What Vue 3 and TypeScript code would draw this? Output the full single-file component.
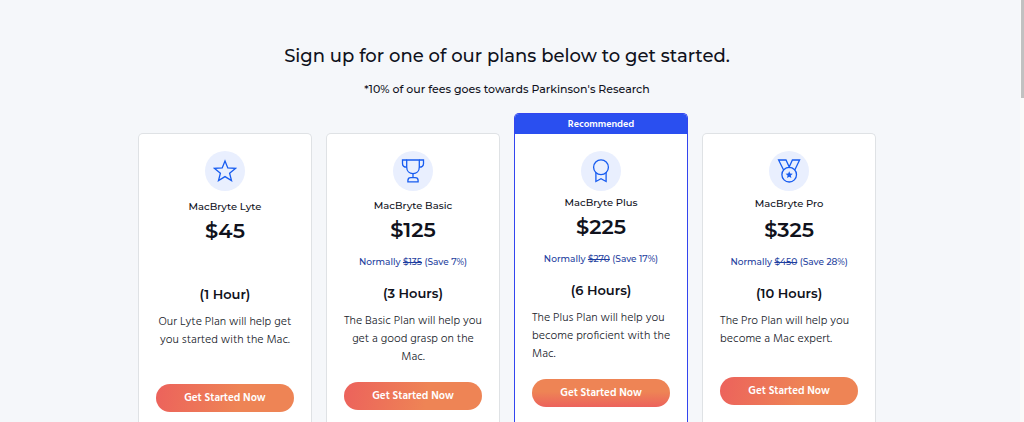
<script setup lang="ts">
type IconName = 'star' | 'trophy' | 'ribbon' | 'medal'

interface Plan {
  id: string
  name: string
  price: string
  regular?: string
  save?: string
  hours: string
  text: string
  icon: IconName
  featured?: boolean
}

const plans: Plan[] = [
  { id: 'lyte', name: 'MacBryte Lyte', price: '$45', hours: '(1 Hour)', text: 'Our Lyte Plan will help get you started with the Mac.', icon: 'star' },
  { id: 'basic', name: 'MacBryte Basic', price: '$125', regular: '$135', save: '7%', hours: '(3 Hours)', text: 'The Basic Plan will help you get a good grasp on the Mac.', icon: 'trophy' },
  { id: 'plus', name: 'MacBryte Plus', price: '$225', regular: '$270', save: '17%', hours: '(6 Hours)', text: 'The Plus Plan will help you become proficient with the Mac.', icon: 'ribbon', featured: true },
  { id: 'pro', name: 'MacBryte Pro', price: '$325', regular: '$450', save: '28%', hours: '(10 Hours)', text: 'The Pro Plan will help you become a Mac expert.', icon: 'medal' },
]
</script>

<template>
  <div class="page">
    <main class="content">
      <h1 class="title">Sign up for one of our plans below to get started.</h1>
      <p class="subtitle">*10% of our fees goes towards Parkinson's Research</p>

      <section class="plans">
        <article v-for="plan in plans" :key="plan.id" class="plan" :class="[plan.id, { featured: plan.featured }]">
          <div v-if="plan.featured" class="ribbon">Recommended</div>
          <div class="body">
            <div class="badge">
              <svg class="icon" viewBox="0 0 24 24" aria-hidden="true">
                <path v-if="plan.icon === 'star'" d="M12 2 L14.8 8.9 L22.4 9.4 L16.6 14.2 L18.5 21.6 L12 17.6 L5.5 21.6 L7.4 14.2 L1.6 9.4 L9.2 8.9 Z" />
                <template v-else-if="plan.icon === 'trophy'">
                  <path d="M5.7 1 H18.3 V8 C18.3 12 15.6 14.6 12 14.6 S5.7 12 5.7 8 Z" />
                  <path d="M5.7 1 H1.5 V4.4 C1.5 6.8 3 8.2 5.8 8.2 M18.3 1 H22.5 V4.4 C22.5 6.8 21 8.2 18.2 8.2" />
                  <path d="M12 14.6 V18.5 M6.9 22.8 V21.4 C6.9 19.7 8.1 18.6 9.8 18.6 H14.2 C15.9 18.6 17.1 19.7 17.1 21.4 V22.8 Z" />
                </template>
                <template v-else-if="plan.icon === 'ribbon'">
                  <circle cx="12" cy="8.3" r="7.4" />
                  <path d="M6.9 13.8 V22.5 L12 19.8 L17.1 22.5 V13.8" />
                </template>
                <template v-else>
                  <circle cx="12.2" cy="15.7" r="7.3" />
                  <path d="M6.6 11 L1.6 1 H9 L12.2 8 L15.4 1 H22.6 L17.8 11 M12.2 8 L11.6 8.7" />
                  <path class="solid" d="M12.2 12.2 L13.2 14.6 L15.8 14.8 L13.8 16.5 L14.4 19 L12.2 17.7 L10 19 L10.6 16.5 L8.6 14.8 L11.2 14.6 Z" />
                </template>
              </svg>
            </div>
            <h2 class="name">{{ plan.name }}</h2>
            <p class="price">{{ plan.price }}</p>
            <p class="note">
              <template v-if="plan.regular">Normally <s>{{ plan.regular }}</s> (Save {{ plan.save }})</template>
            </p>
            <p class="hours">{{ plan.hours }}</p>
            <p class="text">{{ plan.text }}</p>
            <button type="button" class="cta">Get Started Now</button>
          </div>
        </article>
      </section>
    </main>
    <div class="scrollbar" aria-hidden="true"><div class="thumb"></div></div>
  </div>
</template>

<style>
body {
  margin: 0;
  background: #f5f7fa;
}
</style>

<style scoped>
.page {
  display: flex;
  height: 100vh;
  overflow: hidden;
  background: #f5f7fa;
  color: #10121c;
  font-family: Montserrat, Inter, "Liberation Sans", sans-serif;
}
h1, h2, p {
  margin: 0;
}
.content {
  flex: 1;
  display: flex;
  flex-direction: column;
  align-items: center;
  padding: 44px 0 0;
  margin: 0 6px 0 0;
}
.title {
  font-size: 18px;
  line-height: 24px;
  font-weight: 500;
}
.subtitle {
  margin-top: 13px;
  font-size: 11px;
  line-height: 16px;
  font-weight: 500;
}
.plans {
  flex: 1;
  display: grid;
  grid-template-columns: repeat(4, 1fr);
  gap: 14px;
  width: 72.8%;
  margin-top: 16px;
}
.plan {
  display: flex;
  flex-direction: column;
  box-sizing: border-box;
  min-width: 0;
  margin-top: 20px;
  background: #fff;
  border: 1px solid #dfe2e5;
  border-bottom: 0;
  border-radius: 5px 5px 0 0;
}
.featured {
  margin-top: 0;
  border-color: #3345ef;
}
.ribbon {
  height: 20px;
  background: #2a4ff0;
  border-radius: 4px 4px 0 0;
  color: #fff;
  font: 600 10px/20px Hind, "Noto Sans", sans-serif;
  text-align: center;
}
.body {
  display: flex;
  flex-direction: column;
  align-items: center;
  padding: 17px 17px 24px;
  text-align: center;
}
.badge {
  display: flex;
  align-items: center;
  justify-content: center;
  width: 40px;
  height: 40px;
  border-radius: 50%;
  background: #e9effe;
}
.icon {
  width: 24px;
  height: 24px;
  fill: none;
  stroke: #175cf0;
  stroke-width: 1.3;
}
.solid {
  fill: #175cf0;
  stroke: none;
}
.name {
  margin-top: 8px;
  font-size: 10px;
  line-height: 16px;
  font-weight: 500;
}
.price {
  margin-top: 2px;
  font-size: 21px;
  line-height: 28px;
  font-weight: 600;
}
.note {
  min-height: 14px;
  margin-top: 11px;
  color: #1f3fa0;
  font-size: 9px;
  line-height: 14px;
  font-weight: 500;
  white-space: nowrap;
}
.hours {
  margin-top: 15px;
  font-size: 13px;
  line-height: 18px;
  font-weight: 600;
}
.text {
  margin-top: 10px;
  color: #20232b;
  font: 300 12px/18px Hind, "Noto Sans", sans-serif;
}
.cta {
  align-self: stretch;
  height: 28px;
  margin-top: 16px;
  padding: 0;
  border: 0;
  border-radius: 14px;
  background: linear-gradient(100deg, #ec625c, #ee8455 60%);
  color: #fff;
  font: 600 11px/28px Hind, "Noto Sans", sans-serif;
}
.basic .name { margin-top: 7px; }
.plus .name { margin-top: 4px; }
.pro .name { margin-top: 5px; }
.pro .price { margin-top: 4px; }
.plus .text,
.pro .text {
  align-self: stretch;
  margin-right: -12px;
  text-align: left;
}
.lyte .cta { margin-top: 35px; }
.pro .cta { margin-top: 29px; }
.plus .cta { background: linear-gradient(180deg, #ee8455 45%, #ec625c); }
.scrollbar {
  flex: none;
  width: 4px;
  background: #fafafa;
}
.thumb {
  width: 3px;
  height: 98px;
  margin-left: 1px;
  background: #c1c1c1;
}
</style>
